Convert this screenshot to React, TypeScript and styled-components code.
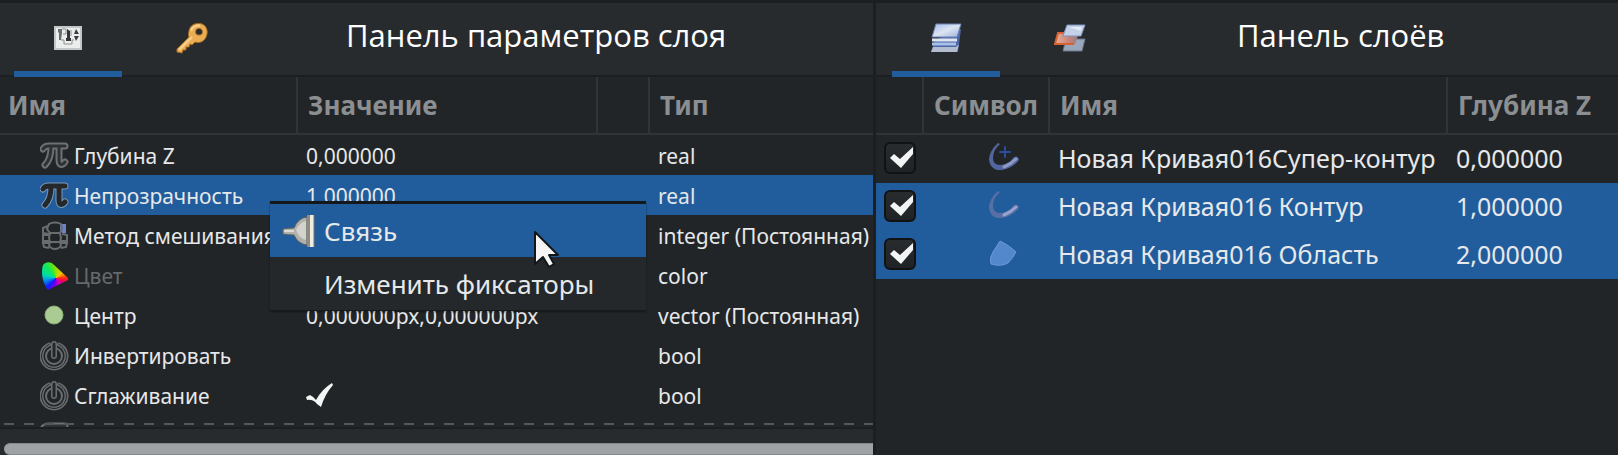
import React from 'react';
import styled, { createGlobalStyle, css } from 'styled-components';

const GlobalStyle = createGlobalStyle`
  *, *::before, *::after { box-sizing: border-box; }
  body {
    margin: 0;
    background: #222527;
    color: #e6e8ea;
    font-family: "Noto Sans", "Open Sans", sans-serif;
  }
`;

const colors = {
  edge: '#1c1f21',
  bar: '#282b2e',
  body: '#222527',
  line: '#313437',
  accent: '#215d9c',
  heading: '#8b8f91',
  muted: '#66696c',
};

const Page = styled.main`
  display: flex;
  min-height: 100vh;
  overflow: hidden;
`;

const Panel = styled.section<{ $grow: number }>`
  position: relative;
  flex: ${p => p.$grow} 1 0;
  min-width: 0;
  display: flex;
  flex-direction: column;
  background: ${colors.body};
  border-top: 3px solid ${colors.edge};

  & + & {
    border-left: 3px solid ${colors.edge};
  }
`;

const TabBar = styled.header<{ $inset: number }>`
  display: flex;
  align-items: stretch;
  height: 74px;
  padding-left: ${p => p.$inset}px;
  background: ${colors.bar};
  border-bottom: 2px solid ${colors.edge};
`;

const Tabs = styled.div`
  display: flex;
  gap: 16px;
  margin-bottom: -2px;
`;

const Tab = styled.button<{ $active?: boolean }>`
  width: 108px;
  padding: 2px 0 0;
  border: 0;
  border-bottom: 6px solid ${p => (p.$active ? colors.accent : 'transparent')};
  background: none;
  display: grid;
  place-items: center;
`;

const Title = styled.h2<{ $space: number }>`
  margin: 0;
  padding-left: ${p => p.$space}px;
  font-family: "Open Sans", "Noto Sans", sans-serif;
  font-size: 31px;
  font-weight: 400;
  line-height: 64px;
  color: #fff;
  white-space: nowrap;
`;

const TableArea = styled.div<{ $height?: number }>`
  position: relative;
  overflow: hidden;
  ${p => p.$height && css`height: ${p.$height}px;`}
`;

const MoreBelow = styled.div`
  position: absolute;
  left: 4px;
  right: 0;
  bottom: 2px;
  height: 2px;
  background: repeating-linear-gradient(90deg, #54585a 0 10px, transparent 10px 20px);
`;

const Table = styled.table`
  width: 100%;
  table-layout: fixed;
  border-collapse: separate;
  border-spacing: 0;
`;

const HeadCell = styled.th<{ $width?: number }>`
  ${p => p.$width && css`width: ${p.$width}px;`}
  height: 58px;
  padding: 0 0 0 8px;
  border-bottom: 2px solid ${colors.line};
  font-size: 26px;
  line-height: 32px;
  font-weight: 700;
  text-align: left;
  white-space: nowrap;
  color: ${colors.heading};

  &:not(:last-child) {
    border-right: 2px solid ${colors.line};
  }
  &:not(:first-child) {
    padding-left: 10px;
  }
`;

const Row = styled.tr<{ $selected?: boolean }>`
  background: ${p => (p.$selected ? colors.accent : 'transparent')};
`;

const ParamCell = styled.td<{ $muted?: boolean }>`
  height: 40px;
  padding: 2px 0 0 8px;
  font-size: 21px;
  line-height: 28px;
  white-space: nowrap;
  color: ${p => (p.$muted ? colors.muted : 'inherit')};

  svg { display: block; }
`;

const ParamName = styled.div`
  display: flex;
  align-items: center;
  gap: 4px;
  padding-left: 32px;
`;

const LayerCell = styled.td`
  height: 48px;
  padding: 0 0 2px 8px;
  font-size: 25px;
  line-height: 32px;
  white-space: nowrap;

  svg { display: block; }
`;

const SymbolBox = styled.div`
  padding-left: 54px;
`;

const CheckLabel = styled.label`
  display: grid;
  width: 32px;
  height: 32px;

  & > * { grid-area: 1 / 1; }
`;

const CheckInput = styled.input`
  appearance: none;
  width: 32px;
  height: 32px;
  margin: 0;
  border: 2px solid #101213;
  border-radius: 6px;
  background: linear-gradient(#292c2e, #202325);
`;

const ScrollTrack = styled.div`
  flex: 1;
  min-height: 28px;
  padding: 14px 0 0 4px;
  background: ${colors.bar};
  border-top: 2px solid ${colors.edge};
`;

const ScrollThumb = styled.div`
  height: 12px;
  border-top: 1px solid #85898b;
  border-bottom: 1px solid #85898b;
  border-radius: 6px 0 0 6px;
  background: #9ea2a4;
`;

const Menu = styled.div`
  position: absolute;
  left: 270px;
  top: 198px;
  width: 376px;
  display: flex;
  flex-direction: column;
  background: #25282a;
  border-top: 3px solid #15181b;
  border-bottom: 1px solid #17191b;
  box-shadow: 0 1px 2px rgba(0, 0, 0, 0.4);
`;

const MenuItem = styled.button<{ $active?: boolean }>`
  display: flex;
  align-items: center;
  height: 53px;
  padding: 0 0 0 12px;
  border: 0;
  background: ${p => (p.$active ? colors.accent : 'transparent')};
  color: inherit;
  font: 26px/32px "Noto Sans", "Open Sans", sans-serif;
  text-align: left;
  white-space: nowrap;
`;

const MenuIcon = styled.span`
  width: 42px;
  height: 34px;

  svg { display: block; }
`;

const Pointer = styled.svg`
  position: absolute;
  left: 532px;
  top: 225px;
`;

function ParamsIcon() {
  return (
    <svg width="30" height="26" viewBox="0 0 30 26" aria-hidden="true">
      <rect x="1" y="1" width="28" height="24" fill="#c4c7c7" />
      <rect x="3" y="3" width="24" height="20" fill="#eceeed" />
      <path d="M5 4h4v4l-1 7H6V8L5 7z" fill="#6a6d6e" />
      <path d="M14 4l3 2v7h1v3h-5v-3h1z" fill="#333638" />
      <path d="M23 4l3 5h-5zM21 11h5l-3 5z" fill="#3b3d3f" />
      <path d="M9 4h4v5h-3M8 15h3v4h8v-4h2M18 5v6" fill="none" stroke="#8c8f90" />
    </svg>
  );
}

function KeyIcon() {
  return (
    <svg width="34" height="32" viewBox="0 0 34 32" aria-hidden="true">
      <path
        fillRule="evenodd"
        fill="#e9ae55"
        stroke="#a86c20"
        strokeWidth="1"
        strokeLinejoin="round"
        d="M14 9C15 3 20 1 25 1.500C30 2 33 7 32 12C31 18 26 22 20 20L17 23L15 22L14 25L11 25L11 28L8 28L7 31L2 30L2 27L14 15C13 13 13.500 11 14 9ZM21 8C20 11 21 13 24 13C27 13 28 11 27 8C26 6 22 6 21 8Z"
      />
      <path d="M4 28L17 15" stroke="#f7d28e" strokeWidth="2" />
      <path d="M16 9C17 5 21 3 25 3.500" stroke="#f7d28e" strokeWidth="2" fill="none" />
    </svg>
  );
}

function LayersIcon() {
  return (
    <svg width="32" height="30" viewBox="0 0 32 30" aria-hidden="true">
      <defs>
        <linearGradient id="sheet" x1="0" y1="0" x2="1" y2="1">
          <stop offset="0" stopColor="#a3bbe8" />
          <stop offset="0.500" stopColor="#dce4f2" />
          <stop offset="1" stopColor="#9bb0d8" />
        </linearGradient>
      </defs>
      <path d="M5 17L31 6L28 29L1 29z" fill="#4c67a6" />
      <path d="M3 24h23l3-3-2 8H1z" fill="#b4bccf" />
      <path d="M2 19.500h24v3H2z" fill="#a9c1ea" />
      <path d="M2 15.500h25v3H2z" fill="#dfe5f0" />
      <path d="M6 1h25l-4 13H2z" fill="url(#sheet)" stroke="#6d86b8" />
    </svg>
  );
}

function LayerSetIcon() {
  return (
    <svg width="32" height="28" viewBox="0 0 32 28" aria-hidden="true">
      <defs>
        <linearGradient id="activeSheet" x1="0" y1="0" x2="1" y2="0">
          <stop offset="0" stopColor="#e9b09a" />
          <stop offset="0.600" stopColor="#c58379" />
          <stop offset="1" stopColor="#8f7c86" />
        </linearGradient>
      </defs>
      <path d="M12 15h19l-3 12H9z" fill="#9aa6ba" stroke="#68748a" />
      <path d="M4 9h21l-4 11H1z" fill="url(#activeSheet)" />
      <path d="M11 9H4L1 20H20" fill="none" stroke="#d8622f" strokeWidth="2" />
      <path d="M13 1h18l-4 11H9z" fill="#c4d1e9" stroke="#7e93be" />
      <path d="M15 3h13l-1 4z" fill="#e5ebf5" />
    </svg>
  );
}

function PiIcon({ dark = false }: { dark?: boolean }) {
  const d = 'M3 8C5 4 8 5 11 5H25M11 6C11 13 9 20 5 24M19 6V19C19 24 22 25 25 21';
  return (
    <svg width="30" height="30" viewBox="0 0 30 30" fill="none" strokeLinecap="round" strokeLinejoin="round" aria-hidden="true">
      <path d={d} stroke={dark ? '#7b98b8' : '#6e7173'} strokeWidth="7" />
      <path d={d} stroke={dark ? '#25282a' : '#2e3133'} strokeWidth={dark ? 5 : 3} />
    </svg>
  );
}

function IntegerIcon() {
  return (
    <svg width="30" height="30" viewBox="0 0 30 30" fill="none" stroke="#6a6d6f" strokeWidth="2" aria-hidden="true">
      <path d="M20 3L26 3V12C24 13 22 12 20 10z" fill="#6c84c4" stroke="none" />
      <path d="M9 3C12 1 18 1 21 3L22 8L20 12H10L7 8zM10 12H20L21 17L20 21H10L9 17zM10 21H20L21 25C18 29 12 29 9 25z" />
      <path d="M8 5L3 7V12L9 13M9 14L3 14V20L9 20M9 22L3 22L4 26L9 27M22 13L27 14V20L21 20M21 22H27L26 26L21 27" />
    </svg>
  );
}

const WheelShape = styled.div`
  width: 28px;
  height: 28px;
  margin: 0 1px;
  clip-path: path("M2 3C5 -1 10 0 12 2L27 16Q28 18 25 19L9 27Q6 29 5 25C1 18 0 9 2 3Z");
  background: conic-gradient(
    from 0deg at 15px 16px,
    #9be000, #f2c500 50deg, #ff2a10 90deg, #f00058 115deg, #d000c0 150deg,
    #6a00e8 195deg, #1020ff 225deg, #00a0e8 262deg, #00dca8 285deg, #10e860 320deg, #58e818 345deg, #9be000
  );
`;

function VectorIcon() {
  return (
    <svg width="30" height="30" viewBox="0 0 30 30" aria-hidden="true">
      <circle cx="14" cy="14" r="9" fill="#aacb91" stroke="#8fb077" strokeWidth="1" />
    </svg>
  );
}

function BoolIcon() {
  return (
    <svg width="30" height="30" viewBox="0 0 30 30" fill="none" strokeLinecap="round" aria-hidden="true">
      <path d="M9 3.500A12.500 12.500 0 1 0 19 3.500" stroke="#6a6d6f" strokeWidth="4" />
      <path d="M9 3.500A12.500 12.500 0 1 0 19 3.500" stroke="#25282a" strokeWidth="1" />
      <circle cx="14" cy="15" r="8" stroke="#6a6d6f" strokeWidth="2" />
      <path d="M14 3V15" stroke="#6a6d6f" strokeWidth="6" />
      <path d="M14 3V15" stroke="#25282a" strokeWidth="3" />
    </svg>
  );
}

function TickIcon() {
  return (
    <svg width="28" height="26" viewBox="0 0 28 26" role="img" aria-label="Да">
      <path d="M0 14L4 12Q8 14 10 17Q16 6 26 0L27 2Q19 11 15 24L11 21Q7 16 1 17z" fill="#f4f5f5" />
    </svg>
  );
}

function CheckMark() {
  return (
    <svg width="32" height="32" viewBox="0 0 32 32" pointerEvents="none" aria-hidden="true">
      <path d="M6 16L10 12L16 17L29 5V12L17 26z" fill="#f3f4f4" />
    </svg>
  );
}

function ConnectIcon() {
  return (
    <svg width="34" height="34" viewBox="0 0 34 34" aria-hidden="true">
      <path d="M1 15Q7 14 12 14Q16 4 25 3V31Q16 30 12 21Q7 21 1 20z" fill="#b1b1ab" stroke="#5d605f" />
      <path d="M14 16Q17 9 24 7V26Q17 24 14 16z" fill="#d3d2cd" />
      <path d="M2 17H12" stroke="#dcdbd5" strokeWidth="2" />
      <rect x="25" y="1" width="3" height="32" fill="#8d8b82" />
      <rect x="28" y="1" width="4" height="32" fill="#efede2" />
      <path d="M32 1V33" stroke="#77756c" />
    </svg>
  );
}

function CurveIcon({ kind }: { kind: 'super' | 'outline' | 'region' }) {
  if (kind === 'region') {
    return (
      <svg width="34" height="32" viewBox="0 0 34 32" aria-hidden="true">
        <path d="M14 3Q23 7 30 14Q27 20 22 25Q15 29 5 26Q3 20 7 14z" fill="#5488cc" stroke="#6b99d6" />
      </svg>
    );
  }
  const main = kind === 'super' ? '#52659f' : '#7078a8';
  const light = kind === 'super' ? '#8e9ac4' : '#98a4d0';
  return (
    <svg width="34" height="32" viewBox="0 0 34 32" fill="none" strokeLinecap="round" aria-hidden="true">
      <path
        d="M12 1Q4 8 3 17Q4 29 16 28Q27 26 33 18Q32 13 28 15Q22 23 14 23Q7 23 7 16Q7 8 14 2z"
        fill={main}
        opacity={kind === 'super' ? 1 : 0.7}
      />
      <path d="M18 25Q25 22 30 17" stroke={light} strokeWidth="3" />
      {kind === 'super' && <path d="M19 5V15M14 10H24" stroke="#2a4c9a" strokeWidth="2" />}
    </svg>
  );
}

type Param = {
  name: string;
  icon: React.ReactNode;
  value?: React.ReactNode;
  type: string;
  selected?: boolean;
  muted?: boolean;
};

const params: Param[] = [
  { name: 'Глубина Z', icon: <PiIcon />, value: '0,000000', type: 'real' },
  { name: 'Непрозрачность', icon: <PiIcon dark />, value: '1,000000', type: 'real', selected: true },
  { name: 'Метод смешивания', icon: <IntegerIcon />, type: 'integer (Постоянная)' },
  { name: 'Цвет', icon: <WheelShape />, type: 'color', muted: true },
  { name: 'Центр', icon: <VectorIcon />, value: '0,000000px,0,000000px', type: 'vector (Постоянная)' },
  { name: 'Инвертировать', icon: <BoolIcon />, type: 'bool' },
  { name: 'Сглаживание', icon: <BoolIcon />, value: <TickIcon />, type: 'bool' },
  { name: '', icon: <PiIcon />, type: '' },
];

const layers = [
  { name: 'Новая Кривая016Супер-контур', kind: 'super', depth: '0,000000', selected: false },
  { name: 'Новая Кривая016 Контур', kind: 'outline', depth: '1,000000', selected: true },
  { name: 'Новая Кривая016 Область', kind: 'region', depth: '2,000000', selected: true },
] as const;

export default function App() {
  return (
    <>
      <GlobalStyle />
      <Page>
        <Panel $grow={873}>
          <TabBar $inset={14}>
            <Tabs>
              <Tab $active aria-label="Параметры"><ParamsIcon /></Tab>
              <Tab aria-label="Ключевые кадры"><KeyIcon /></Tab>
            </Tabs>
            <Title $space={100}>Панель параметров слоя</Title>
          </TabBar>
          <TableArea $height={350}>
            <Table>
              <thead>
                <tr>
                  <HeadCell $width={298}>Имя</HeadCell>
                  <HeadCell $width={300}>Значение</HeadCell>
                  <HeadCell $width={52} />
                  <HeadCell>Тип</HeadCell>
                </tr>
              </thead>
              <tbody>
                {params.map((p, i) => (
                  <Row key={i} $selected={p.selected}>
                    <ParamCell $muted={p.muted}>
                      <ParamName>{p.icon}{p.name}</ParamName>
                    </ParamCell>
                    <ParamCell>{p.value}</ParamCell>
                    <ParamCell />
                    <ParamCell>{p.type}</ParamCell>
                  </Row>
                ))}
              </tbody>
            </Table>
            <MoreBelow />
          </TableArea>
          <ScrollTrack><ScrollThumb /></ScrollTrack>
          <Menu role="menu">
            <MenuItem role="menuitem" $active>
              <MenuIcon><ConnectIcon /></MenuIcon>
              Связь
            </MenuItem>
            <MenuItem role="menuitem">
              <MenuIcon />
              Изменить фиксаторы
            </MenuItem>
          </Menu>
          <Pointer width="28" height="42" viewBox="0 0 28 42" aria-hidden="true">
            <path
              d="M3 4V36L11 29L17 39L22 36L17 27H26z"
              fill="#f6f6f6"
              stroke="#14171a"
              strokeWidth="2"
              strokeLinejoin="round"
            />
          </Pointer>
        </Panel>
        <Panel $grow={742}>
          <TabBar $inset={16}>
            <Tabs>
              <Tab $active aria-label="Слои"><LayersIcon /></Tab>
              <Tab aria-label="Наборы слоёв"><LayerSetIcon /></Tab>
            </Tabs>
            <Title $space={113}>Панель слоёв</Title>
          </TabBar>
          <TableArea>
            <Table>
              <thead>
                <tr>
                  <HeadCell $width={48} />
                  <HeadCell $width={126}>Символ</HeadCell>
                  <HeadCell $width={398}>Имя</HeadCell>
                  <HeadCell>Глубина Z</HeadCell>
                </tr>
              </thead>
              <tbody>
                {layers.map(l => (
                  <Row key={l.name} $selected={l.selected}>
                    <LayerCell>
                      <CheckLabel>
                        <CheckInput type="checkbox" defaultChecked aria-label={l.name} />
                        <CheckMark />
                      </CheckLabel>
                    </LayerCell>
                    <LayerCell><SymbolBox><CurveIcon kind={l.kind} /></SymbolBox></LayerCell>
                    <LayerCell>{l.name}</LayerCell>
                    <LayerCell>{l.depth}</LayerCell>
                  </Row>
                ))}
              </tbody>
            </Table>
          </TableArea>
        </Panel>
      </Page>
    </>
  );
}
